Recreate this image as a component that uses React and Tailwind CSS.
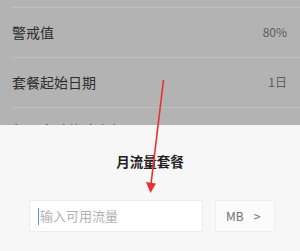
import React from "react";

const rows = [
	{ label: "警戒值", value: "80%" },
	{ label: "套餐起始日期", value: "1日" },
];

const Arrow = () => (
	<svg
		className="absolute left-0 top-0 pointer-events-none"
		width="300"
		height="251"
		viewBox="0 0 300 251"
	>
		<line x1="163.5" y1="80" x2="151" y2="184" stroke="#e8322e" strokeWidth="1.6" />
		<polygon points="146,182 156,183.5 150.5,193" fill="#e8322e" />
	</svg>
);

const App = () => {
	return (
		<main
			className="relative w-[300px] h-[251px] overflow-hidden bg-[#b3b3b3] flex flex-col"
			style={{ fontFamily: '"Noto Sans CJK SC", "Noto Sans", sans-serif' }}
		>
			<div className="h-[125px] pt-[7px] pl-3 overflow-hidden shrink-0">
				<ul>
					{rows.map((item, key) => (
						<li
							key={key}
							className="h-[49px] border-t border-[#bebebe] flex items-center justify-between pr-[13px] mb-px"
						>
							<span className="text-[14px] text-[#2e2e2e] leading-5">{item.label}</span>
							<span className="text-[12px] text-[#5c5c5c]">{item.value}</span>
						</li>
					))}
					<li className="h-[50px] border-t border-[#bebebe] pt-[9px]">
						<span className="text-[14px] text-[#2e2e2e] leading-5">每月自动修改套餐</span>
					</li>
				</ul>
			</div>
			<div className="flex-1 bg-[#f7f7f7] flex flex-col items-center">
				<h2 className="mt-[27px] text-[13.5px] font-bold text-[#1e1e1e] leading-[18px]">
					月流量套餐
				</h2>
				<div className="mt-[30px] flex gap-3 pl-[4px]">
					<div className="w-[174px] h-[32px] bg-white border border-[#ececec] flex items-center pl-[8px]">
						<span className="w-px h-[17px] bg-[#4aa3d8] mr-px"></span>
						<span className="text-[13px] text-[#b2b2b2]">输入可用流量</span>
					</div>
					<div className="w-[60px] h-[32px] bg-[#fbfbfb] border border-[#eeeeee] flex items-center pl-[10px] gap-[10px] text-[#707070]">
						<span className="text-[12px]">MB</span>
						<span className="text-[12px]">&gt;</span>
					</div>
				</div>
			</div>
			<Arrow />
		</main>
	);
};

export default App;
